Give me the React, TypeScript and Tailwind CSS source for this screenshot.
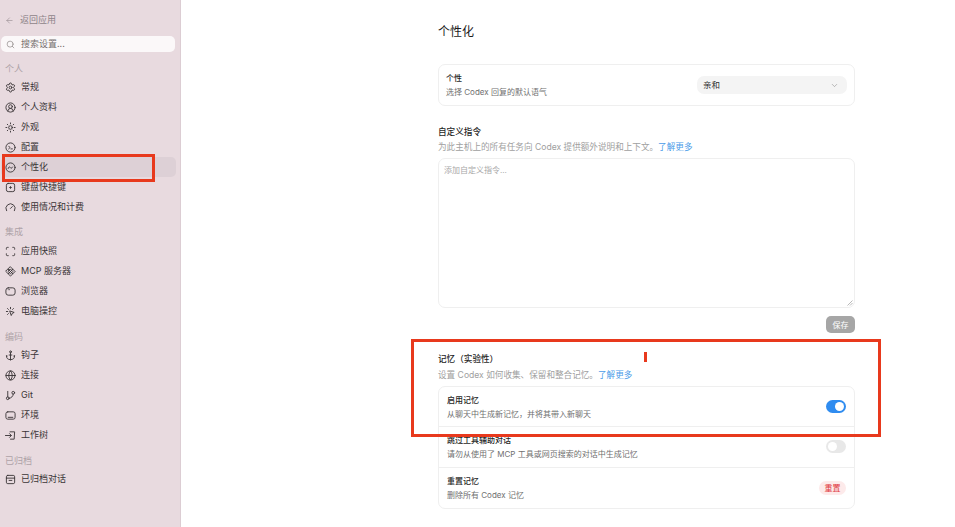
import React from 'react';
import {
  ArrowLeft, Search, Settings, CircleUserRound, Sun, Gauge, Scan, Anchor, Globe, GitBranch, ChevronDown,
} from 'lucide-react';

const Svg = ({ children }: { children: React.ReactNode }) => (
  <svg width="11" height="11" viewBox="0 0 24 24" fill="none" stroke="currentColor" strokeWidth="2" strokeLinecap="round" strokeLinejoin="round">
    {children}
  </svg>
);

const PromptCircle = () => (
  <Svg>
    <circle cx="12" cy="12" r="10" />
    <path d="M8 9l3 3-3 3M13 15h3" />
  </Svg>
);
const SmileCircle = () => (
  <Svg>
    <circle cx="12" cy="12" r="10" />
    <path d="M7 14c1-4 3-4 4.500-2s3 2.500 5-1" />
  </Svg>
);
const KeySquare = () => (
  <Svg>
    <rect x="3" y="3" width="18" height="18" rx="4" />
    <path d="M12 10v4M10 12h4" />
  </Svg>
);
const McpIcon = () => (
  <Svg>
    <path d="M12 2l10 10-10 10L2 12z" />
    <path d="M12 7l5 5-5 5-5-5z" />
    <path d="M7 7l10 10M17 7L7 17" />
  </Svg>
);
const BrowserIcon = () => (
  <Svg>
    <rect x="2" y="4" width="20" height="16" rx="5" />
    <path d="M7 8h.01M10 8h.01" />
  </Svg>
);
const SparkClick = () => (
  <Svg>
    <path d="M11 11l9 3-4 2-2 4zM3 12h3M12 3v3M5.500 5.500l2 2M5.500 18.500l2-2M18.500 5.500l-2 2" />
  </Svg>
);
const EnvIcon = () => (
  <Svg>
    <rect x="2" y="4" width="20" height="16" rx="4" />
    <path d="M7 16h10" />
  </Svg>
);
const TreeIcon = () => (
  <Svg>
    <path d="M1 12h12M10 8l4 4-4 4M11 4h10l-1 16h-8" />
  </Svg>
);
const ArchiveBox = () => (
  <Svg>
    <rect x="3" y="3" width="18" height="18" rx="3" />
    <path d="M3 9h18M9 14h6" />
  </Svg>
);

const Icon11 = { size: 11, strokeWidth: 2 };

type NavItem = { label: string; icon: React.ReactNode; active?: boolean };

const groups: { title: string; gap: string; label: string; items: NavItem[] }[] = [
  {
    title: '个人',
    gap: 'mt-0',
    label: 'h-[17px]',
    items: [
      { label: '常规', icon: <Settings {...Icon11} /> },
      { label: '个人资料', icon: <CircleUserRound {...Icon11} /> },
      { label: '外观', icon: <Sun {...Icon11} /> },
      { label: '配置', icon: <PromptCircle /> },
      { label: '个性化', icon: <SmileCircle />, active: true },
      { label: '键盘快捷键', icon: <KeySquare /> },
      { label: '使用情况和计费', icon: <Gauge {...Icon11} /> },
    ],
  },
  {
    title: '集成',
    gap: 'mt-[6px]',
    label: 'h-[18px]',
    items: [
      { label: '应用快照', icon: <Scan {...Icon11} /> },
      { label: 'MCP 服务器', icon: <McpIcon /> },
      { label: '浏览器', icon: <BrowserIcon /> },
      { label: '电脑操控', icon: <SparkClick /> },
    ],
  },
  {
    title: '编码',
    gap: 'mt-[7px]',
    label: 'h-[17px]',
    items: [
      { label: '钩子', icon: <Anchor {...Icon11} /> },
      { label: '连接', icon: <Globe {...Icon11} /> },
      { label: 'Git', icon: <GitBranch {...Icon11} /> },
      { label: '环境', icon: <EnvIcon /> },
      { label: '工作树', icon: <TreeIcon /> },
    ],
  },
  {
    title: '已归档',
    gap: 'mt-[7px]',
    label: 'h-[17px]',
    items: [{ label: '已归档对话', icon: <ArchiveBox /> }],
  },
];

function Sidebar() {
  return (
    <aside className="w-[181px] shrink-0 bg-[#e8dadf] border-r border-[#dccdd3] pl-[1px] pr-[5px] pt-[13px]">
      <div className="h-[14px] pl-[4px] flex items-center gap-[6px] text-[#8e8489] text-[9px]">
        <ArrowLeft size={9} strokeWidth={1.5} />
        <span>返回应用</span>
      </div>
      <div className="mt-[9px] h-[16px] rounded-[5px] bg-[#fbf8f9] pl-[5px] flex items-center gap-[6px] text-[#77706f] text-[9px]">
        <Search size={9} strokeWidth={1.5} />
        <span>搜索设置...</span>
      </div>
      <div className="mt-[8px]">
        {groups.map((g) => (
          <div key={g.title} className={g.gap}>
            <div className={`${g.label} pl-[4px] flex items-center text-[9px] text-[#aea2a7]`}>{g.title}</div>
            {g.items.map((it) => (
              <div
                key={it.label}
                className={`h-[20px] pl-[4px] flex items-center gap-[5px] rounded-[5px] text-[9px] text-[#3a3537] ${it.active ? 'bg-[#ddd0d6] -mr-px' : ''}`}
              >
                <span className="w-[11px] flex justify-center">{it.icon}</span>
                <span>{it.label}</span>
              </div>
            ))}
          </div>
        ))}
      </div>
    </aside>
  );
}

function Row({ title, sub, right, border }: { title: string; sub: string; right: React.ReactNode; border?: boolean }) {
  return (
    <div className={`h-[40.300px] px-[8px] flex items-center justify-between ${border ? 'border-b border-[#efefef]' : ''}`}>
      <div>
        <div className="text-[8px] leading-[14px] font-medium text-[#1f1f1f]">{title}</div>
        <div className="text-[8px] leading-[14px] text-[#6f6f6f]">{sub}</div>
      </div>
      {right}
    </div>
  );
}

function Toggle({ on }: { on?: boolean }) {
  return (
    <div className={`w-[20px] h-[13px] rounded-full p-[2px] flex ${on ? 'bg-[#2f8cf0] justify-end' : 'bg-[#e8e8e8] justify-start'}`}>
      <div className="w-[9px] h-[9px] rounded-full bg-white" />
    </div>
  );
}

function Main() {
  return (
    <main className="flex-1 pl-[257px]">
      <div className="w-[417px]">
        <h1 className="pt-[23px] h-[64px] text-[12px] leading-[18px] text-[#1a1a1a]">个性化</h1>
        <div className="h-[42px] rounded-[7px] border border-[#efefef] pl-[7px] pr-[7px] flex items-center justify-between">
          <div>
            <div className="text-[8px] leading-[14px] font-medium text-[#1f1f1f]">个性</div>
            <div className="text-[8px] leading-[14px] text-[#6f6f6f]">选择 Codex 回复的默认语气</div>
          </div>
          <div className="w-[150px] h-[18px] rounded-[7px] bg-[#f4f4f4] pl-[6px] pr-[8px] flex items-center justify-between text-[8.500px] text-[#2b2b2b]">
            <span>亲和</span>
            <ChevronDown size={9} strokeWidth={1.5} className="text-[#8a8a8a]" />
          </div>
        </div>

        <div className="mt-[19px] text-[8.600px] leading-[14px] font-medium text-[#1f1f1f]">自定义指令</div>
        <div className="mt-[1px] text-[8.600px] leading-[14px] text-[#a0a0a0]">
          为此主机上的所有任务向 Codex 提供额外说明和上下文。<span className="text-[#4a9be8]">了解更多</span>
        </div>
        <div className="relative mt-[4px] h-[150px] rounded-[7px] border border-[#efefef] pl-[5px] pt-[5px] text-[8px] leading-[12px] text-[#a8a8a8]">
          添加自定义指令...
          <svg className="absolute right-[1px] bottom-[1px]" width="6" height="6" viewBox="0 0 6 6" fill="none" stroke="#8a8a8a" strokeWidth="0.6">
            <path d="M0.500 5.500L5.500 0.500M3 5.500L5.500 3" />
          </svg>
        </div>
        <div className="mt-[8px] flex justify-end">
          <div className="w-[29px] h-[17px] rounded-[5px] bg-[#a6a6a6] text-white text-[8px] flex items-center justify-center">保存</div>
        </div>

        <div className="mt-[19px] text-[8.600px] leading-[14px] font-medium text-[#1f1f1f]">记忆（实验性）</div>
        <div className="mt-[2px] text-[8.600px] leading-[14px] text-[#a0a0a0]">
          设置 Codex 如何收集、保留和整合记忆。<span className="text-[#4a9be8]">了解更多</span>
        </div>
        <div className="mt-[4px] rounded-[7px] border border-[#efefef]">
          <Row border title="启用记忆" sub="从聊天中生成新记忆，并将其带入新聊天" right={<Toggle on />} />
          <Row border title="跳过工具辅助对话" sub="请勿从使用了 MCP 工具或网页搜索的对话中生成记忆" right={<Toggle />} />
          <Row
            title="重置记忆"
            sub="删除所有 Codex 记忆"
            right={<div className="w-[27px] h-[14px] rounded-full bg-[#fdeaea] text-[#e0393e] text-[8px] flex items-center justify-center">重置</div>}
          />
        </div>
      </div>
    </main>
  );
}

export default function App() {
  return (
    <div
      className="relative w-[955px] h-[527px] overflow-hidden bg-white flex"
      style={{ fontFamily: '"Inter", "Noto Sans CJK SC", sans-serif' }}
    >
      <Sidebar />
      <Main />
      {/* annotation marks */}
      <div className="absolute left-[2px] top-[154px] w-[153px] h-[28px] border-[3px] border-[#e8391d]" />
      <div className="absolute left-[411px] top-[339px] w-[470px] h-[98px] border-[3px] border-[#e8391d]" />
      <div className="absolute left-[644px] top-[352px] w-[3px] h-[10px] bg-[#e8391d]" />
    </div>
  );
}
